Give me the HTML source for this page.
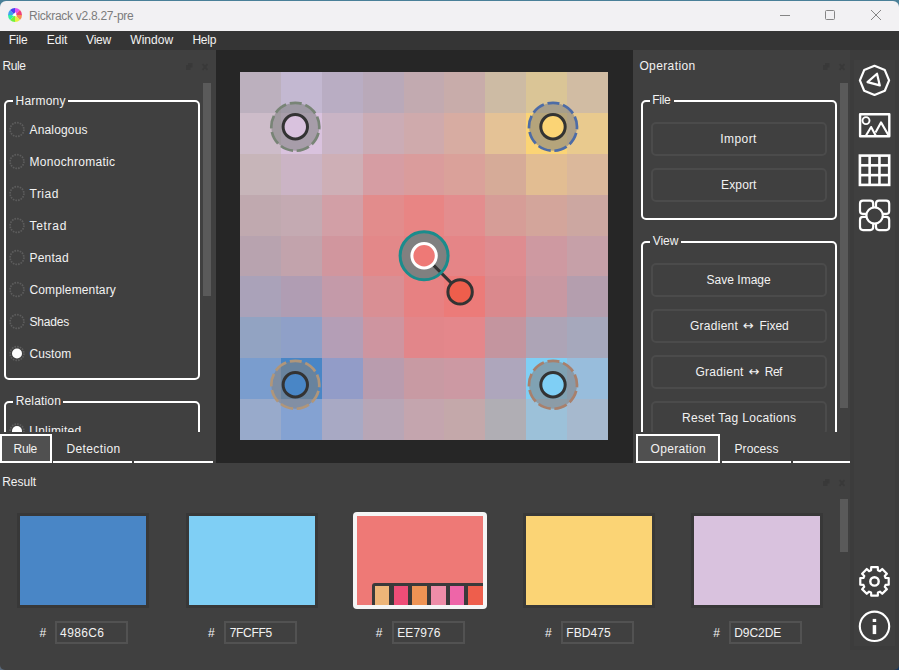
<!DOCTYPE html>
<html><head><meta charset="utf-8"><title>Rickrack v2.8.27-pre</title>
<style>
html,body{margin:0;padding:0;}
body{width:899px;height:670px;overflow:hidden;position:relative;background:#404040;font-family:"Liberation Sans",sans-serif;}
.abs{position:absolute}
.t{position:absolute;white-space:pre;line-height:16px;height:16px;font-size:12px;color:#f2f2f2;}
.gb{position:absolute;border:2px solid #fff;border-radius:5px;box-sizing:border-box;}
.gbl{position:absolute;background:#404040;height:4px;}
.btn{position:absolute;width:176px;height:34px;box-sizing:border-box;border:2px solid #4b4b4b;border-radius:5px;}
.inp{position:absolute;width:73px;height:23px;box-sizing:border-box;border:2px solid #525252;}
.sb{position:absolute;width:8px;background:#5a5a5a;}
.tabsel{position:absolute;box-sizing:border-box;border:2px solid #fff;background:#505050;}
.ul{position:absolute;height:2px;background:#fff;}
.arr{font-family:'DejaVu Sans',sans-serif}
</style></head><body>
<!-- window frame -->
<div class="abs" style="left:0;top:660px;width:899px;height:10px;background:linear-gradient(90deg,#5a6a7c 0,#5a6a7c 50%,#17375c 50%)"></div>
<div class="abs" style="left:0;top:640px;width:899px;height:30px;background:#404040;border-radius:0 0 5px 5px"></div>
<div class="abs" style="left:0;top:0;width:899px;height:31px;background:#4a8098"></div>
<div class="abs" style="left:0;top:1px;width:899px;height:30px;background:#f2f1f3;border-radius:6px 6px 0 0"></div>
<!-- app icon -->
<svg class="abs" style="left:4px;top:4px" width="22" height="22" viewBox="0 0 22 22"><path d="M11 11 L11.00 4.00 A7 7 0 0 1 15.95 6.05 Z" fill="#E052F0"/><path d="M11 11 L15.95 6.05 A7 7 0 0 1 18.00 11.00 Z" fill="#F04078"/><path d="M11 11 L18.00 11.00 A7 7 0 0 1 15.95 15.95 Z" fill="#F89050"/><path d="M11 11 L15.95 15.95 A7 7 0 0 1 11.00 18.00 Z" fill="#E6F040"/><path d="M11 11 L11.00 18.00 A7 7 0 0 1 6.05 15.95 Z" fill="#70F040"/><path d="M11 11 L6.05 15.95 A7 7 0 0 1 4.00 11.00 Z" fill="#30F0A0"/><path d="M11 11 L4.00 11.00 A7 7 0 0 1 6.05 6.05 Z" fill="#40A0F0"/><path d="M11 11 L6.05 6.05 A7 7 0 0 1 11.00 4.00 Z" fill="#4444F0"/><polygon points="11.7,8.0 8.0,11.5 12.8,12.6" fill="#fff"/></svg>
<!-- window controls -->
<svg class="abs" style="left:770px;top:1px" width="129" height="30" viewBox="0 0 129 30" fill="none" stroke="#858585" stroke-width="1">
<line x1="10" y1="14.5" x2="20" y2="14.5"/>
<rect x="55.5" y="9.5" width="9" height="9" rx="1"/>
<path d="M101 9 L111 19 M111 9 L101 19"/>
</svg>
<!-- menu -->
<div class="abs" style="left:0;top:31px;width:899px;height:19px;background:#353535"></div>
<!-- center dark -->
<div class="abs" style="left:216px;top:50px;width:417px;height:413px;background:#262626"></div>
<svg class="abs" style="left:240px;top:72px" width="368.5" height="368.5" viewBox="0 0 368.5 368.5" shape-rendering="crispEdges">
<rect x="0.0" y="0.0" width="41.19" height="41.19" fill="#BCB0BE"/>
<rect x="40.89" y="0.0" width="41.19" height="41.19" fill="#C3B8D1"/>
<rect x="81.78" y="0.0" width="41.19" height="41.19" fill="#B9ADC3"/>
<rect x="122.67" y="0.0" width="41.19" height="41.19" fill="#B9A9B9"/>
<rect x="163.56" y="0.0" width="41.18" height="41.19" fill="#C2AAB0"/>
<rect x="204.44" y="0.0" width="41.19" height="41.19" fill="#C8ACAA"/>
<rect x="245.33" y="0.0" width="41.19" height="41.19" fill="#CDBBA4"/>
<rect x="286.22" y="0.0" width="41.19" height="41.19" fill="#DAC596"/>
<rect x="327.11" y="0.0" width="41.19" height="41.19" fill="#D1BCA3"/>
<rect x="0.0" y="40.89" width="41.19" height="41.19" fill="#CDBCC9"/>
<rect x="40.89" y="40.89" width="41.19" height="41.19" fill="#D9C2DE"/>
<rect x="81.78" y="40.89" width="41.19" height="41.19" fill="#C9B4C5"/>
<rect x="122.67" y="40.89" width="41.19" height="41.19" fill="#CBACB5"/>
<rect x="163.56" y="40.89" width="41.18" height="41.19" fill="#CFAAAC"/>
<rect x="204.44" y="40.89" width="41.19" height="41.19" fill="#D7ACA2"/>
<rect x="245.33" y="40.89" width="41.19" height="41.19" fill="#E4C296"/>
<rect x="286.22" y="40.89" width="41.19" height="41.19" fill="#FBD475"/>
<rect x="327.11" y="40.89" width="41.19" height="41.19" fill="#E9CA8E"/>
<rect x="0.0" y="81.78" width="41.19" height="41.19" fill="#C7B5B9"/>
<rect x="40.89" y="81.78" width="41.19" height="41.19" fill="#CBB4C5"/>
<rect x="81.78" y="81.78" width="41.19" height="41.19" fill="#CEAFB6"/>
<rect x="122.67" y="81.78" width="41.19" height="41.19" fill="#D69DA3"/>
<rect x="163.56" y="81.78" width="41.18" height="41.19" fill="#DA9C9C"/>
<rect x="204.44" y="81.78" width="41.19" height="41.19" fill="#DAA19A"/>
<rect x="245.33" y="81.78" width="41.19" height="41.19" fill="#D6AB98"/>
<rect x="286.22" y="81.78" width="41.19" height="41.19" fill="#E2BD92"/>
<rect x="327.11" y="81.78" width="41.19" height="41.19" fill="#DBB89B"/>
<rect x="0.0" y="122.67" width="41.19" height="41.19" fill="#C0A9AF"/>
<rect x="40.89" y="122.67" width="41.19" height="41.19" fill="#C4AAB2"/>
<rect x="81.78" y="122.67" width="41.19" height="41.19" fill="#D29FA6"/>
<rect x="122.67" y="122.67" width="41.19" height="41.19" fill="#E28C8C"/>
<rect x="163.56" y="122.67" width="41.18" height="41.19" fill="#E88584"/>
<rect x="204.44" y="122.67" width="41.19" height="41.19" fill="#E38D8E"/>
<rect x="245.33" y="122.67" width="41.19" height="41.19" fill="#D69D97"/>
<rect x="286.22" y="122.67" width="41.19" height="41.19" fill="#D3A59B"/>
<rect x="327.11" y="122.67" width="41.19" height="41.19" fill="#CCA7A1"/>
<rect x="0.0" y="163.56" width="41.19" height="41.18" fill="#B8A3AF"/>
<rect x="40.89" y="163.56" width="41.19" height="41.18" fill="#C2A3AC"/>
<rect x="81.78" y="163.56" width="41.19" height="41.18" fill="#D1969E"/>
<rect x="122.67" y="163.56" width="41.19" height="41.18" fill="#E38889"/>
<rect x="163.56" y="163.56" width="41.18" height="41.18" fill="#E78182"/>
<rect x="204.44" y="163.56" width="41.19" height="41.18" fill="#E58587"/>
<rect x="245.33" y="163.56" width="41.19" height="41.18" fill="#DE8C90"/>
<rect x="286.22" y="163.56" width="41.19" height="41.18" fill="#CE99A1"/>
<rect x="327.11" y="163.56" width="41.19" height="41.18" fill="#C6A0A8"/>
<rect x="0.0" y="204.44" width="41.19" height="41.19" fill="#AAA2B9"/>
<rect x="40.89" y="204.44" width="41.19" height="41.19" fill="#B09DB3"/>
<rect x="81.78" y="204.44" width="41.19" height="41.19" fill="#C49AA9"/>
<rect x="122.67" y="204.44" width="41.19" height="41.19" fill="#D98F94"/>
<rect x="163.56" y="204.44" width="41.18" height="41.19" fill="#E78182"/>
<rect x="204.44" y="204.44" width="41.19" height="41.19" fill="#EC7B79"/>
<rect x="245.33" y="204.44" width="41.19" height="41.19" fill="#DA898D"/>
<rect x="286.22" y="204.44" width="41.19" height="41.19" fill="#C898A2"/>
<rect x="327.11" y="204.44" width="41.19" height="41.19" fill="#B49EAE"/>
<rect x="0.0" y="245.33" width="41.19" height="41.19" fill="#92A3C2"/>
<rect x="40.89" y="245.33" width="41.19" height="41.19" fill="#8FA0C8"/>
<rect x="81.78" y="245.33" width="41.19" height="41.19" fill="#B49EB6"/>
<rect x="122.67" y="245.33" width="41.19" height="41.19" fill="#CE95A0"/>
<rect x="163.56" y="245.33" width="41.18" height="41.19" fill="#E2868A"/>
<rect x="204.44" y="245.33" width="41.19" height="41.19" fill="#E4878B"/>
<rect x="245.33" y="245.33" width="41.19" height="41.19" fill="#C4959F"/>
<rect x="286.22" y="245.33" width="41.19" height="41.19" fill="#ADA4B6"/>
<rect x="327.11" y="245.33" width="41.19" height="41.19" fill="#A6A8BC"/>
<rect x="0.0" y="286.22" width="41.19" height="41.19" fill="#7A9DCE"/>
<rect x="40.89" y="286.22" width="41.19" height="41.19" fill="#4986C6"/>
<rect x="81.78" y="286.22" width="41.19" height="41.19" fill="#929CC8"/>
<rect x="122.67" y="286.22" width="41.19" height="41.19" fill="#B99CAE"/>
<rect x="163.56" y="286.22" width="41.18" height="41.19" fill="#C89AA3"/>
<rect x="204.44" y="286.22" width="41.19" height="41.19" fill="#CC99A3"/>
<rect x="245.33" y="286.22" width="41.19" height="41.19" fill="#AEA6BC"/>
<rect x="286.22" y="286.22" width="41.19" height="41.19" fill="#7FCFF5"/>
<rect x="327.11" y="286.22" width="41.19" height="41.19" fill="#98BDDC"/>
<rect x="0.0" y="327.11" width="41.19" height="41.19" fill="#98AACB"/>
<rect x="40.89" y="327.11" width="41.19" height="41.19" fill="#84A2D2"/>
<rect x="81.78" y="327.11" width="41.19" height="41.19" fill="#A8A9C4"/>
<rect x="122.67" y="327.11" width="41.19" height="41.19" fill="#B8A6B6"/>
<rect x="163.56" y="327.11" width="41.18" height="41.19" fill="#C4A5AE"/>
<rect x="204.44" y="327.11" width="41.19" height="41.19" fill="#C4A8AA"/>
<rect x="245.33" y="327.11" width="41.19" height="41.19" fill="#B0AEB4"/>
<rect x="286.22" y="327.11" width="41.19" height="41.19" fill="#9CC1D9"/>
<rect x="327.11" y="327.11" width="41.19" height="41.19" fill="#A6B9CE"/>
<g shape-rendering="geometricPrecision"><circle cx="55.30000000000001" cy="54.8" r="24" fill="rgba(128,128,128,0.57)" stroke="#788476" stroke-width="2.7" stroke-dasharray="13 3.75" stroke-dashoffset="6.5" transform="rotate(-90 55.30000000000001 54.8)"/><circle cx="55.30000000000001" cy="54.8" r="12.2" fill="#D9C2DE" stroke="#333333" stroke-width="3"/><circle cx="313" cy="54.8" r="24" fill="rgba(128,128,128,0.57)" stroke="#4D6CA6" stroke-width="2.7" stroke-dasharray="13 3.75" stroke-dashoffset="6.5" transform="rotate(-90 313 54.8)"/><circle cx="313" cy="54.8" r="12.2" fill="#FBD475" stroke="#333333" stroke-width="3"/><circle cx="55.30000000000001" cy="312.8" r="24" fill="rgba(128,128,128,0.57)" stroke="#B0967A" stroke-width="2.7" stroke-dasharray="13 3.75" stroke-dashoffset="6.5" transform="rotate(-90 55.30000000000001 312.8)"/><circle cx="55.30000000000001" cy="312.8" r="12.2" fill="#4986C6" stroke="#333333" stroke-width="3"/><circle cx="313" cy="312.8" r="24" fill="rgba(128,128,128,0.57)" stroke="#A8806C" stroke-width="2.7" stroke-dasharray="13 3.75" stroke-dashoffset="6.5" transform="rotate(-90 313 312.8)"/><circle cx="313" cy="312.8" r="12.2" fill="#7FCFF5" stroke="#333333" stroke-width="3"/><circle cx="184.10000000000002" cy="183.8" r="24" fill="#808080"/><line x1="193.70000000000002" y1="193.4" x2="212.10000000000002" y2="211.89999999999998" stroke="#333" stroke-width="3"/><circle cx="184.10000000000002" cy="183.8" r="24" fill="none" stroke="#1B8C8C" stroke-width="3"/><circle cx="184.10000000000002" cy="183.8" r="12.2" fill="#EE7976" stroke="#ffffff" stroke-width="3"/><circle cx="220.10000000000002" cy="219.89999999999998" r="12.2" fill="#EE5E4C" stroke="#333" stroke-width="3"/></g>
</svg>
<!-- side bar -->
<div class="abs" style="left:850px;top:50px;width:49px;height:600px;background:#3c3c3c"></div>
<div class="abs" style="left:854px;top:60px;width:41px;height:586px;background:#3f3f3f"></div>

<svg style="position:absolute;left:855px;top:60px" width="40" height="40" viewBox="0 0 40 40" fill="none" stroke="#fff" stroke-width="2.4" stroke-linejoin="round">
<polygon points="19.50,5.80 29.82,10.08 34.10,20.40 29.82,30.72 19.50,35.00 9.18,30.72 4.90,20.40 9.18,10.08" stroke-width="2.2"/>
<polygon points="22.0,13.7 12.5,22.1 24.8,25.4" stroke-width="2.2"/>
</svg>
<svg style="position:absolute;left:855px;top:105px" width="40" height="40" viewBox="0 0 40 40" fill="none" stroke="#fff" stroke-width="2.4" stroke-linejoin="round">
<rect x="5.1" y="9.3" width="29.2" height="22"/>
<circle cx="11" cy="15.6" r="3.5" stroke-width="1.9"/>
<polyline points="10.7,31 16.1,22 20.8,30.8" stroke-width="2.1"/>
<polyline points="20.5,27.6 26,17.4 33.8,30.8" stroke-width="2.1"/>
</svg>
<svg style="position:absolute;left:855px;top:148px" width="40" height="40" viewBox="0 0 40 40" fill="none" stroke="#fff" stroke-width="2.6">
<rect x="4.9" y="7.6" width="29.3" height="29.3"/>
<line x1="14.65" y1="7.6" x2="14.65" y2="36.9"/><line x1="24.45" y1="7.6" x2="24.45" y2="36.9"/>
<line x1="4.9" y1="17.35" x2="34.2" y2="17.35"/><line x1="4.9" y1="27.15" x2="34.2" y2="27.15"/>
</svg>
<svg style="position:absolute;left:855px;top:195px" width="40" height="40" viewBox="0 0 40 40" fill="none" stroke="#fff" stroke-width="2.2">
<rect x="5.0" y="5.7" width="13.2" height="13.2" rx="3"/>
<rect x="21.0" y="5.7" width="13.2" height="13.2" rx="3"/>
<rect x="5.0" y="21.9" width="13.2" height="13.2" rx="3"/>
<rect x="21.0" y="21.9" width="13.2" height="13.2" rx="3"/>
<circle cx="19.6" cy="20.5" r="8.2" fill="#3f3f3f"/>
</svg>
<svg style="position:absolute;left:855px;top:560px" width="40" height="40" viewBox="0 0 40 40" fill="none" stroke="#fff" stroke-width="2.2" stroke-linejoin="round">
<path d="M16.09 10.31 L16.20 7.18 L22.80 7.18 L22.91 10.31 L24.93 11.15 L27.23 9.01 L31.89 13.67 L29.75 15.97 L30.59 17.99 L33.72 18.10 L33.72 24.70 L30.59 24.81 L29.75 26.83 L31.89 29.13 L27.23 33.79 L24.93 31.65 L22.91 32.49 L22.80 35.62 L16.20 35.62 L16.09 32.49 L14.07 31.65 L11.77 33.79 L7.11 29.13 L9.25 26.83 L8.41 24.81 L5.28 24.70 L5.28 18.10 L8.41 17.99 L9.25 15.97 L7.11 13.67 L11.77 9.01 L14.07 11.15Z"/>
<circle cx="19.5" cy="21.4" r="4.2" stroke-width="2.4"/>
</svg>
<svg style="position:absolute;left:855px;top:606px" width="40" height="40" viewBox="0 0 40 40" fill="none" stroke="#fff" stroke-width="2.1">
<circle cx="19.5" cy="20.3" r="14.7"/>
<rect x="17.7" y="12.9" width="3.5" height="3.1" fill="#fff" stroke="none"/>
<rect x="17.7" y="19.1" width="3.5" height="9" fill="#fff" stroke="none"/>
</svg>

<!-- LEFT PANEL -->
<div class="abs" style="left:0;top:83px;width:216px;height:349px;overflow:hidden">
<div class="abs" style="left:0;top:-83px;width:216px;height:600px">
<div class="gb" style="left:4px;top:100px;width:196px;height:280px"></div>
<div class="gbl" style="left:13px;top:99px;width:55px"></div>
<div class="gb" style="left:4px;top:401px;width:196px;height:120px"></div>
<div class="gbl" style="left:13px;top:400px;width:50px"></div>
<svg class="abs" style="left:0;top:0" width="40" height="600" viewBox="0 0 40 600" fill="none" stroke="#5c5c5c" stroke-width="1.7" stroke-dasharray="1.6 1.1">
<circle cx="17" cy="129.5" r="6.9"/>
<circle cx="17" cy="161.5" r="6.9"/>
<circle cx="17" cy="193.5" r="6.9"/>
<circle cx="17" cy="225.5" r="6.9"/>
<circle cx="17" cy="257.5" r="6.9"/>
<circle cx="17" cy="289.5" r="6.9"/>
<circle cx="17" cy="321.5" r="6.9"/>
<circle cx="17" cy="353.5" r="6.9"/>
<circle cx="17" cy="431" r="6.9"/>
<circle cx="17" cy="353.5" r="5" fill="#fff" stroke="none"/><circle cx="17" cy="431" r="5" fill="#fff" stroke="none"/></svg>
<span class="t " style="left:29.50px;top:121.50px;font-size:12px;color:#f2f2f2;letter-spacing:0.161px">Analogous</span>
<span class="t " style="left:29.50px;top:153.50px;font-size:12px;color:#f2f2f2;letter-spacing:0.289px">Monochromatic</span>
<span class="t " style="left:29.50px;top:185.50px;font-size:12px;color:#f2f2f2;letter-spacing:0.495px">Triad</span>
<span class="t " style="left:29.50px;top:217.50px;font-size:12px;color:#f2f2f2;letter-spacing:0.704px">Tetrad</span>
<span class="t " style="left:29.50px;top:249.50px;font-size:12px;color:#f2f2f2;letter-spacing:0.208px">Pentad</span>
<span class="t " style="left:29.50px;top:281.50px;font-size:12px;color:#f2f2f2;letter-spacing:0.134px">Complementary</span>
<span class="t " style="left:29.50px;top:313.50px;font-size:12px;color:#f2f2f2;letter-spacing:-0.180px">Shades</span>
<span class="t " style="left:29.50px;top:345.50px;font-size:12px;color:#f2f2f2;letter-spacing:0.070px">Custom</span>
<span class="t " style="left:29.30px;top:422.50px;font-size:12px;color:#f2f2f2;letter-spacing:0.232px">Unlimited</span>
<span class="t " style="left:15.60px;top:93.00px;font-size:12px;color:#f2f2f2;letter-spacing:0.187px">Harmony</span>
<span class="t " style="left:15.70px;top:393.00px;font-size:12px;color:#f2f2f2;letter-spacing:0.164px">Relation</span>
</div></div>
<div class="sb" style="left:203px;top:83px;height:213px"></div>
<!-- RIGHT PANEL -->
<div class="abs" style="left:633px;top:83px;width:217px;height:349px;overflow:hidden">
<div class="abs" style="left:-633px;top:-83px;width:850px;height:600px">
<div class="gb" style="left:641px;top:100px;width:196px;height:120px"></div>
<div class="gbl" style="left:650px;top:99px;width:24px"></div>
<div class="gb" style="left:641px;top:241px;width:196px;height:300px"></div>
<div class="gbl" style="left:650px;top:240px;width:31px"></div>
<div class="btn" style="left:651px;top:122px"></div>
<div class="btn" style="left:651px;top:168px"></div>
<div class="btn" style="left:651px;top:263px"></div>
<div class="btn" style="left:651px;top:309px"></div>
<div class="btn" style="left:651px;top:355px"></div>
<div class="btn" style="left:651px;top:401px"></div>
<span class="t " style="left:652.30px;top:92.00px;font-size:12px;color:#f2f2f2;letter-spacing:-0.321px">File</span>
<span class="t " style="left:652.80px;top:233.00px;font-size:12px;color:#f2f2f2;letter-spacing:-0.076px">View</span>
<span class="t " style="left:720.30px;top:131.00px;font-size:12px;color:#f2f2f2;letter-spacing:0.425px">Import</span>
<span class="t " style="left:721.00px;top:177.00px;font-size:12px;color:#f2f2f2;letter-spacing:0.150px">Export</span>
<span class="t " style="left:706.60px;top:272.00px;font-size:12px;color:#f2f2f2;letter-spacing:0.004px">Save Image</span>
<span class="t " style="left:690.00px;top:318.00px;font-size:12px;color:#f2f2f2;letter-spacing:0.258px">Gradient</span>
<span class="t " style="left:759.40px;top:318.00px;font-size:12px;color:#f2f2f2;letter-spacing:0.008px">Fixed</span>
<span class="t " style="left:695.40px;top:364.00px;font-size:12px;color:#f2f2f2;letter-spacing:0.287px">Gradient</span>
<span class="t " style="left:764.80px;top:364.00px;font-size:12px;color:#f2f2f2;letter-spacing:-0.520px">Ref</span>
<span class="t arr" style="left:743.10px;top:318.10px;font-size:13px;color:#f2f2f2;letter-spacing:0.000px">↔</span>
<span class="t arr" style="left:748.70px;top:364.10px;font-size:13px;color:#f2f2f2;letter-spacing:0.000px">↔</span>
<span class="t " style="left:682.00px;top:410.00px;font-size:12px;color:#f2f2f2;letter-spacing:0.304px">Reset Tag Locations</span>
</div></div>
<div class="sb" style="left:840px;top:83px;height:325px"></div>
<!-- tabs -->
<div class="tabsel" style="left:0;top:434px;width:52px;height:29px"></div>
<div class="ul" style="left:53px;top:461px;width:79px"></div>
<div class="ul" style="left:134px;top:461px;width:79px"></div>
<div class="tabsel" style="left:636px;top:434px;width:84px;height:29px"></div>
<div class="ul" style="left:722px;top:461px;width:69px"></div>
<div class="ul" style="left:793px;top:461px;width:57px"></div>
<!-- result -->
<div style="position:absolute;left:17px;top:513px;width:132px;height:95px;background:#383838"></div>
<div style="position:absolute;left:20px;top:516px;width:126px;height:88.5px;background:#4986C6"></div>
<div style="position:absolute;left:186px;top:513px;width:132px;height:95px;background:#383838"></div>
<div style="position:absolute;left:189px;top:516px;width:126px;height:88.5px;background:#7FCFF5"></div>
<div style="position:absolute;left:353px;top:512px;width:134px;height:97px;background:#f5f5f5;border-radius:4px"></div>
<div style="position:absolute;left:357px;top:516px;width:126px;height:89px;background:#EE7976"></div>
<div style="position:absolute;left:523px;top:513px;width:132px;height:95px;background:#383838"></div>
<div style="position:absolute;left:526px;top:516px;width:126px;height:88.5px;background:#FBD475"></div>
<div style="position:absolute;left:691px;top:513px;width:132px;height:95px;background:#383838"></div>
<div style="position:absolute;left:694px;top:516px;width:126px;height:88.5px;background:#D9C2DE"></div>
<div style="position:absolute;left:371.5px;top:582.5px;width:111.5px;height:22.5px;background:#3a3a3a;border-top-left-radius:3px"></div>
<div style="position:absolute;left:374.80px;top:586px;width:14.70px;height:19px;background:#EDB578"></div>
<div style="position:absolute;left:393.52px;top:586px;width:14.70px;height:19px;background:#EE4D77"></div>
<div style="position:absolute;left:412.24px;top:586px;width:14.70px;height:19px;background:#EE9354"></div>
<div style="position:absolute;left:430.96px;top:586px;width:14.70px;height:19px;background:#EE8DA8"></div>
<div style="position:absolute;left:449.68px;top:586px;width:14.70px;height:19px;background:#EE65A8"></div>
<div style="position:absolute;left:468.40px;top:586px;width:14.60px;height:19px;background:#EE5E4C"></div>
<div class="inp" style="left:55px;top:621px"></div>
<div class="inp" style="left:224px;top:621px"></div>
<div class="inp" style="left:392px;top:621px"></div>
<div class="inp" style="left:561px;top:621px"></div>
<div class="inp" style="left:729px;top:621px"></div>
<div class="sb" style="left:840px;top:499px;height:53px"></div>
<!-- dim dock icons -->
<svg class="abs" style="left:186px;top:63px" width="24" height="8" viewBox="0 0 24 8" fill="#393939" stroke="none"><rect x="2" y="0" width="4.5" height="4.5"/><rect x="0" y="2.2" width="4.5" height="4.8"/><path d="M16.6 1.2 L21.4 6.8 M21.4 1.2 L16.6 6.8" stroke="#393939" stroke-width="1.8" fill="none"/></svg>
<svg class="abs" style="left:823px;top:63px" width="24" height="8" viewBox="0 0 24 8" fill="#393939" stroke="none"><rect x="2" y="0" width="4.5" height="4.5"/><rect x="0" y="2.2" width="4.5" height="4.8"/><path d="M16.6 1.2 L21.4 6.8 M21.4 1.2 L16.6 6.8" stroke="#393939" stroke-width="1.8" fill="none"/></svg>
<svg class="abs" style="left:823px;top:479px" width="24" height="8" viewBox="0 0 24 8" fill="#393939" stroke="none"><rect x="2" y="0" width="4.5" height="4.5"/><rect x="0" y="2.2" width="4.5" height="4.8"/><path d="M16.6 1.2 L21.4 6.8 M21.4 1.2 L16.6 6.8" stroke="#393939" stroke-width="1.8" fill="none"/></svg>
<span class="t ttl" style="left:29.00px;top:7.50px;font-size:12px;color:#7c7c7c;letter-spacing:-0.282px">Rickrack v2.8.27-pre</span>
<span class="t " style="left:8.70px;top:32.00px;font-size:12px;color:#f2f2f2;letter-spacing:-0.121px">File</span>
<span class="t " style="left:46.70px;top:32.00px;font-size:12px;color:#f2f2f2;letter-spacing:0.019px">Edit</span>
<span class="t " style="left:86.10px;top:32.00px;font-size:12px;color:#f2f2f2;letter-spacing:-0.242px">View</span>
<span class="t " style="left:130.30px;top:32.00px;font-size:12px;color:#f2f2f2;letter-spacing:0.017px">Window</span>
<span class="t " style="left:192.40px;top:32.00px;font-size:12px;color:#f2f2f2;letter-spacing:-0.202px">Help</span>
<span class="t " style="left:2.40px;top:58.00px;font-size:12px;color:#f2f2f2;letter-spacing:-0.369px">Rule</span>
<span class="t " style="left:639.40px;top:58.00px;font-size:12px;color:#f2f2f2;letter-spacing:0.384px">Operation</span>
<span class="t " style="left:2.20px;top:474.00px;font-size:12px;color:#f2f2f2;letter-spacing:-0.016px">Result</span>
<span class="t " style="left:60.10px;top:624.50px;font-size:12px;color:#f2f2f2;letter-spacing:0.368px">4986C6</span>
<span class="t " style="left:39.40px;top:624.50px;font-size:12px;color:#f2f2f2;letter-spacing:0.000px">#</span>
<span class="t " style="left:229.70px;top:624.50px;font-size:12px;color:#f2f2f2;letter-spacing:-0.286px">7FCFF5</span>
<span class="t " style="left:208.00px;top:624.50px;font-size:12px;color:#f2f2f2;letter-spacing:0.000px">#</span>
<span class="t " style="left:397.30px;top:624.50px;font-size:12px;color:#f2f2f2;letter-spacing:0.074px">EE7976</span>
<span class="t " style="left:375.80px;top:624.50px;font-size:12px;color:#f2f2f2;letter-spacing:0.000px">#</span>
<span class="t " style="left:566.30px;top:624.50px;font-size:12px;color:#f2f2f2;letter-spacing:0.070px">FBD475</span>
<span class="t " style="left:544.90px;top:624.50px;font-size:12px;color:#f2f2f2;letter-spacing:0.000px">#</span>
<span class="t " style="left:734.20px;top:624.50px;font-size:12px;color:#f2f2f2;letter-spacing:-0.049px">D9C2DE</span>
<span class="t " style="left:713.30px;top:624.50px;font-size:12px;color:#f2f2f2;letter-spacing:0.000px">#</span>
<span class="t " style="left:13.60px;top:440.70px;font-size:12px;color:#f2f2f2;letter-spacing:-0.335px">Rule</span>
<span class="t " style="left:66.50px;top:440.70px;font-size:12px;color:#f2f2f2;letter-spacing:0.372px">Detection</span>
<span class="t " style="left:650.60px;top:440.70px;font-size:12px;color:#f2f2f2;letter-spacing:0.297px">Operation</span>
<span class="t " style="left:734.50px;top:440.70px;font-size:12px;color:#f2f2f2;letter-spacing:0.092px">Process</span>
</body></html>
